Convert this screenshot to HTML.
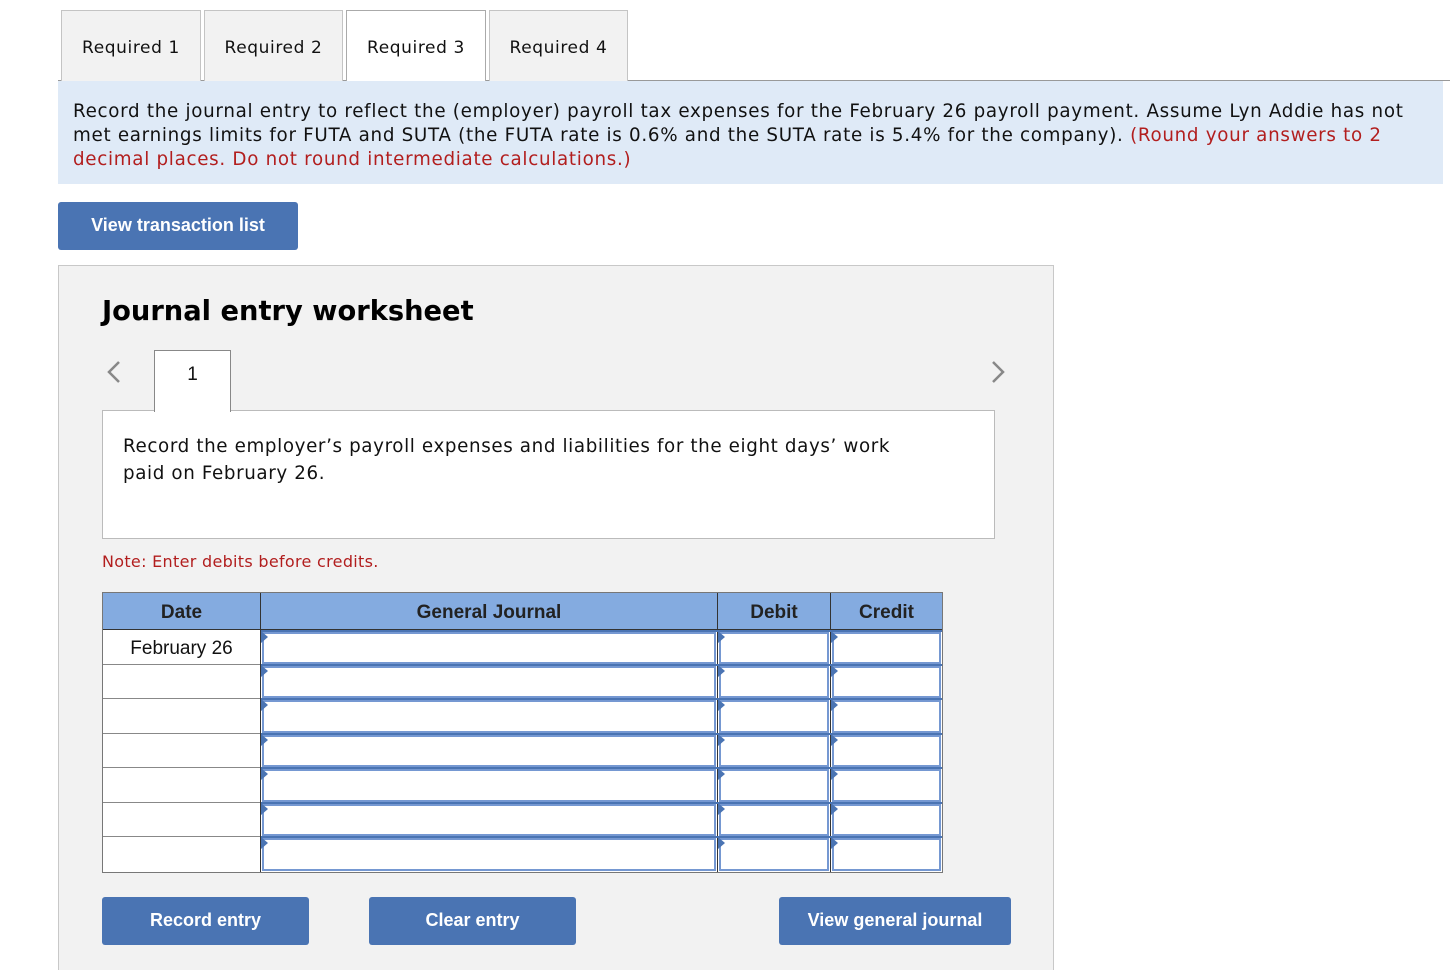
<!DOCTYPE html>
<html><head><meta charset="utf-8"><style>
*{box-sizing:border-box;margin:0;padding:0}
html,body{width:1450px;height:970px;overflow:hidden}
body{background:#fff;font-family:"DejaVu Sans","Liberation Sans",sans-serif;position:relative;color:#111}
.a{position:absolute}
.tab{position:absolute;top:10px;height:71px;border:1px solid #c4c4c4;border-bottom:none;background:#f2f2f2;font-size:17px;letter-spacing:0.6px;text-align:center;line-height:74px}
.btn{position:absolute;background:#4a74b3;color:#fff;font-family:"Liberation Sans",sans-serif;font-weight:bold;font-size:18px;text-align:center;border-radius:3px}
.inp{position:absolute;background:#fff;border:2px solid #7598d2}
.tri{position:absolute;width:0;height:0;border-top:6px solid transparent;border-bottom:6px solid transparent;border-left:7px solid #4a74b3}
.hd{position:absolute;font-family:'Liberation Sans',sans-serif;font-weight:bold;font-size:19px;top:602px;text-align:center;color:#222}
</style></head><body>
<div class="a" style="left:58px;top:80px;width:1392px;height:1px;background:#999"></div>
<div class="tab" style="left:61px;width:140px">Required 1</div>
<div class="tab" style="left:204px;width:139px">Required 2</div>
<div class="tab" style="left:346px;width:140px;background:#fff;height:72px;border-color:#aaa">Required 3</div>
<div class="tab" style="left:489px;width:139px">Required 4</div>
<div class="a" style="left:58px;top:81px;width:1385px;height:103px;background:#dfeaf7"></div>
<div class="a" style="left:73px;top:100px;width:1355px;font-size:18.3px;letter-spacing:0.7px;line-height:24px">Record the journal entry to reflect the (employer) payroll tax expenses for the February 26 payroll payment. Assume Lyn Addie has not met earnings limits for FUTA and SUTA (the FUTA rate is 0.6% and the SUTA rate is 5.4% for the company). <span style="color:#b21e1e">(Round your answers to 2 decimal places. Do not round intermediate calculations.)</span></div>
<div class="btn" style="left:58px;top:202px;width:240px;height:48px;line-height:46px">View transaction list</div>
<div class="a" style="left:58px;top:265px;width:996px;height:705px;background:#f2f2f2;border:1px solid #c8c8c8;border-bottom:none"></div>
<div class="a" style="left:102px;top:296px;font-size:27.3px;font-weight:bold;color:#000">Journal entry worksheet</div>
<svg class="a" style="left:104px;top:360px" width="20" height="26"><path d="M15 2 L5 12 L15 22" stroke="#888" stroke-width="2.5" fill="none"/></svg>
<svg class="a" style="left:988px;top:360px" width="20" height="26"><path d="M5 2 L15 12 L5 22" stroke="#888" stroke-width="2.5" fill="none"/></svg>
<div class="a" style="left:102px;top:410px;width:893px;height:129px;background:#fff;border:1px solid #bbb"></div>
<div class="a" style="left:154px;top:350px;width:77px;height:62px;background:#fff;border:1px solid #888;border-bottom:none;text-align:center;font-family:'Liberation Sans',sans-serif;font-size:19px;line-height:48px">1</div>
<div class="a" style="left:123px;top:433px;width:800px;font-size:18.3px;letter-spacing:0.62px;line-height:27px">Record the employer’s payroll expenses and liabilities for the eight days’ work paid on February 26.</div>
<div class="a" style="left:102px;top:552px;font-size:16px;letter-spacing:0.3px;color:#b21e1e">Note: Enter debits before credits.</div>
<div class="a" style="left:102px;top:592px;width:841px;height:281px;background:#fff;border:1px solid #777"></div>
<div class="a" style="left:103px;top:593px;width:839px;height:37px;background:#84abe0;border-bottom:1px solid #333"></div>
<div class="a" style="left:260px;top:593px;width:1px;height:279px;background:#333"></div>
<div class="a" style="left:717px;top:593px;width:1px;height:279px;background:#333"></div>
<div class="a" style="left:830px;top:593px;width:1px;height:279px;background:#333"></div>
<div class="hd" style="left:103px;width:157px">Date</div>
<div class="hd" style="left:261px;width:456px">General Journal</div>
<div class="hd" style="left:718px;width:112px">Debit</div>
<div class="hd" style="left:831px;width:111px">Credit</div>
<div class="a" style="font-family:'Liberation Sans',sans-serif;font-size:19px;top:638px;left:103px;width:157px;text-align:center">February 26</div>
<div id="rows"></div>
<script>
var tops=[631,665,699,734,768,803,837,872];var h='';
for(var i=0;i<7;i++){var t=tops[i],b=tops[i+1];
if(i>0)h+='<div class="a" style="left:103px;top:'+(t-1)+'px;width:157px;height:1px;background:#888"></div>';
h+='<div class="a" style="left:261px;top:'+(t-1)+'px;width:681px;height:2px;background:#4a74b3"></div>';
[[261,456],[718,112],[831,111]].forEach(function(c){h+='<div class="inp" style="left:'+(c[0]+1)+'px;top:'+(t+1)+'px;width:'+(c[1]-2)+'px;height:'+(b-t-2)+'px"></div><div class="tri" style="left:'+c[0]+'px;top:'+t+'px"></div>';});}
document.getElementById('rows').innerHTML=h;
</script>
<div class="btn" style="left:102px;top:897px;width:207px;height:48px;line-height:46px">Record entry</div>
<div class="btn" style="left:369px;top:897px;width:207px;height:48px;line-height:46px">Clear entry</div>
<div class="btn" style="left:779px;top:897px;width:232px;height:48px;line-height:46px">View general journal</div>
</body></html>
